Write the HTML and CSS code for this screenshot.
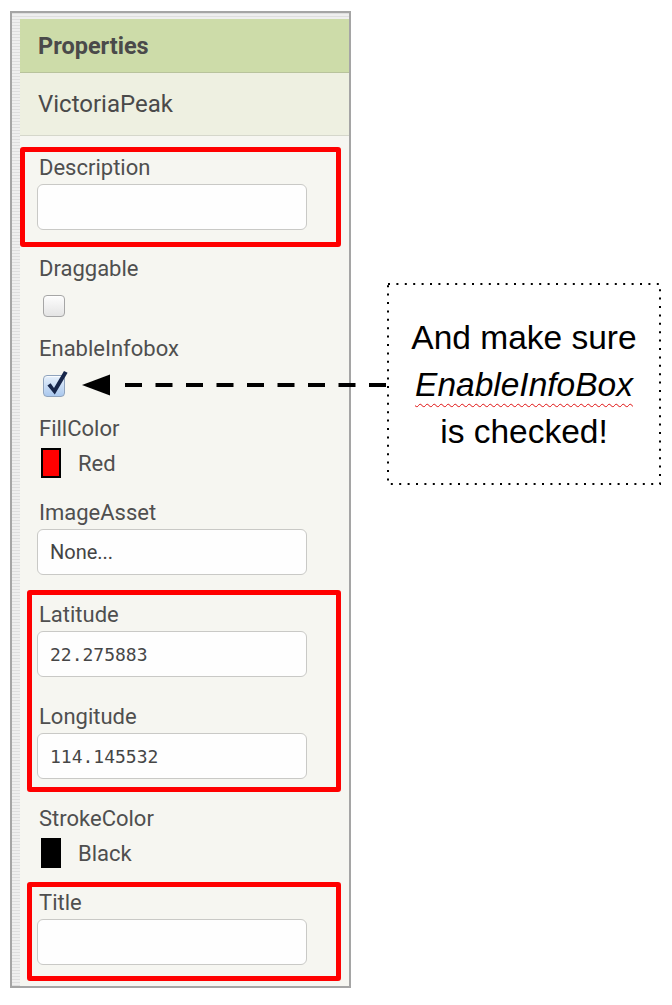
FILE: index.html
```html
<!DOCTYPE html>
<html>
<head>
<meta charset="utf-8">
<link rel="stylesheet" href="styles.css">
</head>
<body>
<div class="frame">
  <div class="panel">
    <div class="hdr">Properties</div>
    <div class="comp">VictoriaPeak</div>
    <div class="props">
      <div class="prop p-input first">
        <div class="lbl">Description</div>
        <div class="tb"></div>
      </div>
      <div class="prop p-check">
        <div class="lbl">Draggable</div>
        <span class="cb"></span>
      </div>
      <div class="prop p-check">
        <div class="lbl">EnableInfobox</div>
        <span class="cb on">
          <svg class="tick" width="28" height="28" viewBox="0 0 28 28"><path d="M3.4 15.4 L6.6 13.2 L10 18 L20 1 L23.6 2.8 L10.8 24.4 Z" fill="#17264a"/></svg>
        </span>
      </div>
      <div class="prop p-color">
        <div class="lbl">FillColor</div>
        <div class="color"><span class="sw red"></span><span>Red</span></div>
      </div>
      <div class="prop p-input">
        <div class="lbl">ImageAsset</div>
        <div class="tb txt">None...</div>
      </div>
      <div class="prop p-input">
        <div class="lbl">Latitude</div>
        <div class="tb num">22.275883</div>
      </div>
      <div class="prop p-input">
        <div class="lbl">Longitude</div>
        <div class="tb num">114.145532</div>
      </div>
      <div class="prop p-color">
        <div class="lbl">StrokeColor</div>
        <div class="color"><span class="sw black"></span><span>Black</span></div>
      </div>
      <div class="prop p-input">
        <div class="lbl">Title</div>
        <div class="tb"></div>
      </div>
    </div>
  </div>
</div>

<div class="hl hl-desc"></div>
<div class="hl hl-latlon"></div>
<div class="hl hl-title"></div>

<svg class="arrow" width="310" height="26" viewBox="0 0 310 26">
  <path d="M2 13 L30 2.5 L30 23.5 Z" fill="#000"/>
  <line x1="45" y1="13" x2="308" y2="13" stroke="#000" stroke-width="4" stroke-dasharray="17 13.5"/>
</svg>

<div class="callout">
  <svg class="dots" width="274" height="202" viewBox="0 0 274 202">
    <rect x="1" y="1" width="272" height="200" fill="none" stroke="#000" stroke-width="2" stroke-dasharray="2 6.4"/>
  </svg>
  <p class="note">And make sure<br><em class="wavy">EnableInfoBox</em><br>is checked!</p>
</div>
</body>
</html>
```
FILE: styles.css
```css
* { box-sizing: border-box; }
html, body { margin: 0; padding: 0; background: #fff; }
body {
  width: 672px;
  height: 1005px;
  position: relative;
  overflow: hidden;
  font-family: Roboto, "Liberation Sans", sans-serif;
  color: #4e4e4e;
}

.frame {
  margin: 11px 0 0 10px;
  width: 341px;
  height: 977px;
  border: 2px solid #a5a5a5;
  padding: 6px 0 0 8px;
  background-color: #e9e9e9;
  background-image: repeating-linear-gradient(0deg, #dedede 0 1px, #efefef 1px 3px);
}

.panel {
  height: 100%;
  background: #f6f6f1;
  display: flex;
  flex-direction: column;
}

.hdr {
  height: 54px;
  flex: none;
  background: #cddca9;
  border-bottom: 1px solid #b8c39c;
  display: flex;
  align-items: center;
  padding-left: 18px;
  font-size: 23.5px;
  font-weight: 700;
  color: #4a4a4a;
}

.comp {
  height: 63px;
  flex: none;
  background: #eef0e1;
  border-bottom: 1px solid #d5d7cb;
  display: flex;
  align-items: center;
  padding-left: 18px;
  font-size: 24px;
  color: #4a4a4a;
}

.props {
  padding: 20px 0 0 17px;
  display: flex;
  flex-direction: column;
}

.lbl {
  height: 24px;
  line-height: 24px;
  font-size: 22px;
  padding-left: 2px;
  color: #4f4f4f;
}

.p-input { padding-bottom: 28px; }
.p-input.first { padding-bottom: 27px; }
.p-input .lbl { margin-bottom: 4px; }

.tb {
  width: 270px;
  height: 46px;
  border: 1px solid #c9c9c6;
  border-radius: 6px;
  background: #fefefe;
  display: flex;
  align-items: center;
  padding-left: 12px;
  color: #444;
}
.tb.txt { font-size: 20px; }
.tb.num {
  font-family: "DejaVu Sans Mono", "Liberation Mono", monospace;
  font-size: 18px;
  color: #464646;
}

.p-check { padding-bottom: 20px; }
.p-check .lbl { margin-bottom: 14px; }

.cb {
  position: relative;
  display: block;
  width: 22px;
  height: 22px;
  margin-left: 6px;
  border: 1px solid #a6a6a6;
  border-radius: 4px;
  background: linear-gradient(#fdfdfd, #e4e4e4);
  box-shadow: inset 0 1px 1px rgba(255,255,255,0.8);
}
.cb.on {
  border-color: #8fa3bd;
  background: linear-gradient(#e6f0fb, #aac8ee);
}
.tick {
  position: absolute;
  left: 0;
  top: -6px;
  overflow: visible;
}

.p-color { padding-bottom: 23px; }
.p-color .lbl { margin-bottom: 7px; }

.color {
  display: flex;
  align-items: center;
  gap: 17px;
  padding-left: 4px;
  font-size: 22px;
  color: #4f4f4f;
}
.sw {
  display: block;
  width: 20px;
  height: 30px;
  border: 2px solid #000;
}
.sw.red { background: #ff0000; }
.sw.black { background: #000; }

/* annotation overlays */
.hl {
  position: absolute;
  border: 5px solid #ff0000;
  border-radius: 3px;
}
.hl-desc { left: 20px; top: 147px; width: 321px; height: 100px; }
.hl-latlon { left: 27px; top: 590px; width: 314px; height: 202px; }
.hl-title { left: 27px; top: 882px; width: 314px; height: 99px; }

.arrow {
  position: absolute;
  left: 80px;
  top: 372px;
}

.callout {
  position: absolute;
  left: 387px;
  top: 283px;
  width: 274px;
  height: 202px;
  display: flex;
  align-items: center;
  justify-content: center;
}
.dots {
  position: absolute;
  left: 0;
  top: 0;
}
.note {
  margin: 0;
  font-family: "Liberation Sans", Arial, sans-serif;
  font-size: 33.5px;
  line-height: 47px;
  text-align: center;
  color: #000;
}
.wavy {
  text-decoration: underline wavy #e01010;
  text-decoration-thickness: 1px;
  text-underline-offset: 7px;
}
```
